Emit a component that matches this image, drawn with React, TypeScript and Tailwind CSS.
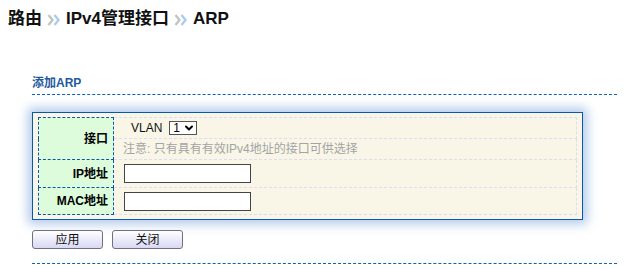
import { ChevronDown } from "lucide-react";

const font = { fontFamily: '"Liberation Sans", Arial, "Noto Sans CJK SC", sans-serif' };

const Crumb = () => (
  <svg width="14" height="14" viewBox="0 0 14 14" className="mx-[5px] mt-[2px]">
    <path d="M1.5 2 L5.5 7 L1.5 12" fill="none" stroke="#c4c4c4" strokeWidth="2.4" />
    <path d="M7.5 2 L11.5 7 L7.5 12" fill="none" stroke="#a8cdf0" strokeWidth="2.4" />
  </svg>
);

const Label = ({ text, rows }: { text: string; rows?: number }) => (
  <td
    rowSpan={rows}
    className="w-[75px] border border-dashed border-[#0b57a8] bg-[#dcfcdc] pr-[5px] text-right align-middle text-[12px] font-bold text-black"
  >
    {text}
  </td>
);

const App = () => {
  return (
    <div className="h-[269px] w-[625px] bg-white text-black" style={font}>
      <div className="flex items-center pl-[8px] pt-[8px] text-[17px] font-bold leading-[22px] text-[#111]">
        <span>路由</span>
        <Crumb />
        <span>IPv4管理接口</span>
        <Crumb />
        <span>ARP</span>
      </div>

      <div className="ml-[32px] mr-[8px] mt-[45px]">
        <div className="border-b border-dashed border-[#0b62b8] pb-[3px] text-[12px] font-bold leading-[16px] text-[#1f5a9c]">
          添加ARP
        </div>

        <div className="mt-[17px] w-[551px] border border-[#0a58ad] bg-[#f9f6e8] px-[5px] pb-[4px] pt-[4px] shadow-[0_0_10px_4px_rgba(60,120,200,0.4)]">
          <table className="w-full border-collapse text-[12px]">
            <tbody>
              <tr className="h-[21px]">
                <Label text="接口" rows={2} />
                <td className="border border-dashed border-[#dcdcf6] pl-[17px] align-middle">
                  <div className="flex items-center">
                    <span className="text-[#111]">VLAN</span>
                    <span className="ml-[7px] flex h-[14px] w-[28px] items-center border border-[#555] bg-white pl-[3px] text-[12px] leading-none">
                      1
                      <ChevronDown size={12} strokeWidth={4} className="ml-[3px]" />
                    </span>
                  </div>
                </td>
              </tr>
              <tr className="h-[21px]">
                <td className="border border-dashed border-[#dcdcf6] pl-[9px] align-middle text-[#a4a4a4]">
                  注意: 只有具有有效IPv4地址的接口可供选择
                </td>
              </tr>
              <tr className="h-[28px]">
                <Label text="IP地址" />
                <td className="border border-dashed border-[#dcdcf6] pl-[10px] align-middle">
                  <input className="block h-[19px] w-[127px] border border-[#444] bg-white px-1 text-[12px] outline-none" />
                </td>
              </tr>
              <tr className="h-[27px]">
                <Label text="MAC地址" />
                <td className="border border-dashed border-[#dcdcf6] pl-[10px] align-middle">
                  <input className="block h-[19px] w-[127px] border border-[#444] bg-white px-1 text-[12px] outline-none" />
                </td>
              </tr>
            </tbody>
          </table>
        </div>

        <div className="mt-[10px] flex gap-[9px]">
          <button className="h-[19px] w-[71px] rounded-[3px] border border-[#707080] bg-gradient-to-b from-white to-[#d8d8f4] text-[12px] leading-none text-[#111]">
            应用
          </button>
          <button className="h-[19px] w-[71px] rounded-[3px] border border-[#707080] bg-gradient-to-b from-white to-[#d8d8f4] text-[12px] leading-none text-[#111]">
            关闭
          </button>
        </div>

        <div className="mt-[14px] border-b border-dashed border-[#0b62b8]" />
      </div>
    </div>
  );
};

export default App;
